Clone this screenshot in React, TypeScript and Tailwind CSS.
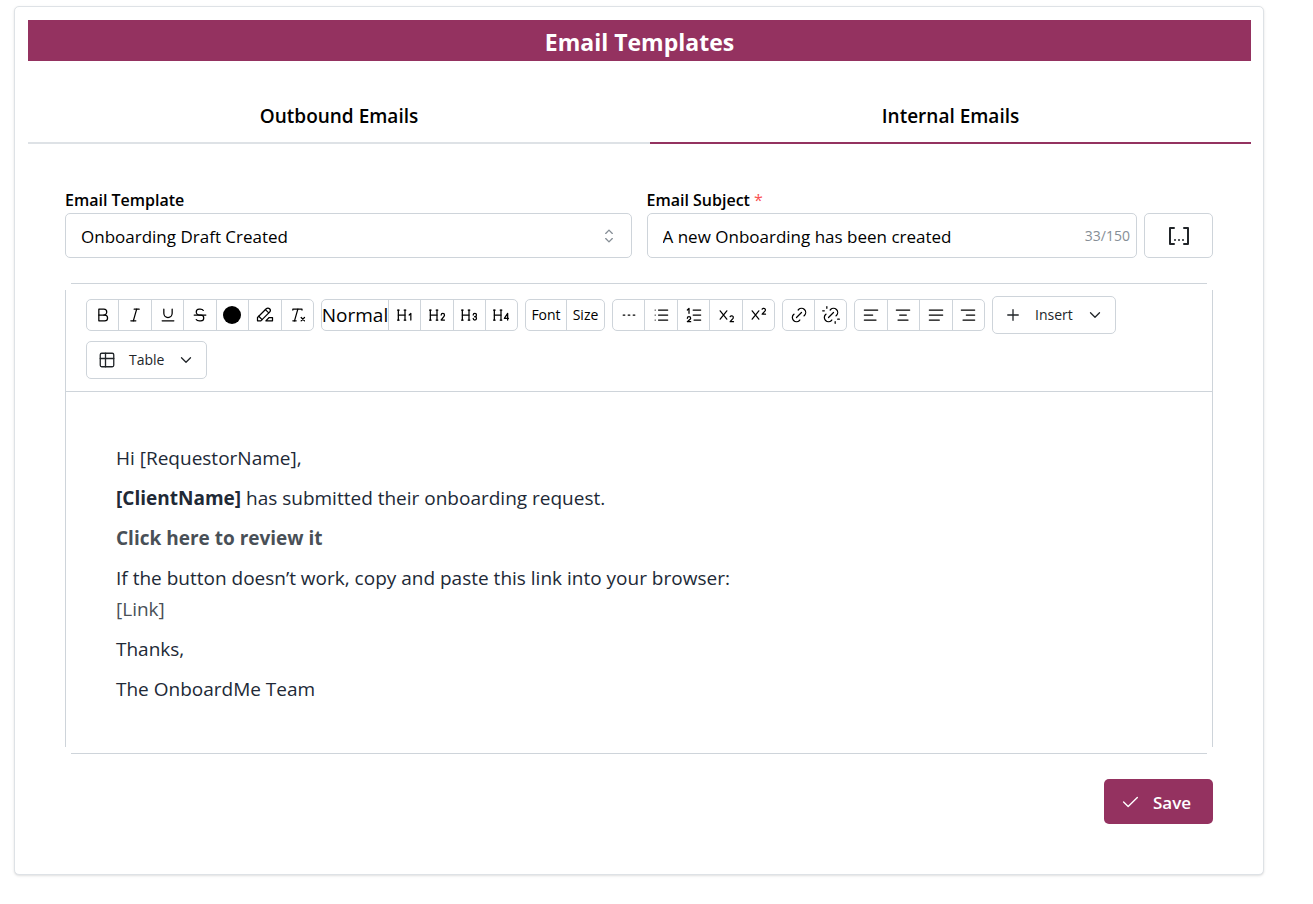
import React, { useState } from 'react';
import {
  TbAlignCenter, TbAlignJustified, TbAlignLeft, TbAlignRight, TbBold, TbBracketsContain, TbCheck,
  TbChevronDown, TbClearFormatting, TbH1, TbH2, TbH3, TbH4, TbHighlight, TbItalic, TbLineDashed,
  TbLink, TbList, TbListNumbers, TbPlus, TbStrikethrough, TbSubscript, TbSuperscript, TbTable,
  TbUnderline, TbUnlink,
} from 'react-icons/tb';
import type { IconType } from 'react-icons';

const SUBJECT_LIMIT = 150;

interface ControlProps {
  label: string;
  icon?: IconType;
  className?: string;
  children?: React.ReactNode;
}

function Control({ label, icon: Icon, className = 'flex-1', children }: ControlProps) {
  return (
    <button type="button" aria-label={label} className={`flex h-full items-center justify-center whitespace-nowrap text-black hover:bg-gray-50 ${className}`}>
      {Icon ? <Icon size={20} strokeWidth={1.5} /> : children}
    </button>
  );
}

function ControlGroup({ className, children }: { className: string; children: React.ReactNode }) {
  return (
    <div className={`flex h-8 divide-x divide-[#ced4da] overflow-hidden rounded-[5px] border border-[#ced4da] ${className}`}>
      {children}
    </div>
  );
}

function MenuButton({ icon: Icon, label }: { icon: IconType; label: string }) {
  return (
    <button type="button" className="flex h-[38px] items-center gap-[13px] rounded-[5px] border border-[#ced4da] px-[11px] text-sm font-medium text-[#212529] hover:bg-gray-50">
      <Icon size={18} strokeWidth={1.75} />
      {label}
      <TbChevronDown size={18} strokeWidth={1.75} />
    </button>
  );
}

function Toolbar() {
  return (
    <div className="flex flex-wrap items-center gap-[7px] px-5 pt-[6px] pb-3">
      <ControlGroup className="w-[228px]">
        <Control label="Bold" icon={TbBold} />
        <Control label="Italic" icon={TbItalic} />
        <Control label="Underline" icon={TbUnderline} />
        <Control label="Strikethrough" icon={TbStrikethrough} />
        <Control label="Text color">
          <span className="size-[18px] rounded-full bg-black" />
        </Control>
        <Control label="Highlight text" icon={TbHighlight} />
        <Control label="Clear formatting" icon={TbClearFormatting} />
      </ControlGroup>
      <ControlGroup className="w-[197px]">
        <Control label="Normal text" className="w-[67px] text-[19px]">Normal</Control>
        <Control label="Heading 1" icon={TbH1} />
        <Control label="Heading 2" icon={TbH2} />
        <Control label="Heading 3" icon={TbH3} />
        <Control label="Heading 4" icon={TbH4} />
      </ControlGroup>
      <ControlGroup className="w-[80px]">
        <Control label="Font" className="w-[41px] text-sm">Font</Control>
        <Control label="Size" className="flex-1 text-sm">Size</Control>
      </ControlGroup>
      <ControlGroup className="w-[163px]">
        <Control label="Horizontal line" icon={TbLineDashed} />
        <Control label="Bullet list" icon={TbList} />
        <Control label="Ordered list" icon={TbListNumbers} />
        <Control label="Subscript" icon={TbSubscript} />
        <Control label="Superscript" icon={TbSuperscript} />
      </ControlGroup>
      <ControlGroup className="w-[65px]">
        <Control label="Link" icon={TbLink} />
        <Control label="Remove link" icon={TbUnlink} />
      </ControlGroup>
      <ControlGroup className="w-[131px]">
        <Control label="Align left" icon={TbAlignLeft} />
        <Control label="Align center" icon={TbAlignCenter} />
        <Control label="Justify" icon={TbAlignJustified} />
        <Control label="Align right" icon={TbAlignRight} />
      </ControlGroup>
      <MenuButton icon={TbPlus} label="Insert" />
      <MenuButton icon={TbTable} label="Table" />
    </div>
  );
}

function Editor() {
  return (
    <div className="mt-[25px]">
      <div className="mx-[6px] h-px bg-[#ced4da]" />
      <div className="h-[6px]" />
      <div className="border-x border-[#ced4da]">
        <Toolbar />
        <div
          role="textbox"
          aria-label="Email body"
          aria-multiline="true"
          contentEditable
          suppressContentEditableWarning
          className="flex flex-col gap-[9px] border-t border-[#ced4da] px-[50px] pt-[51px] pb-[42px] text-[19px] leading-[31px] text-[#212936] outline-none"
        >
          <p>Hi [RequestorName],</p>
          <p><strong>[ClientName]</strong> has submitted their onboarding request.</p>
          <p><a href="#review" className="font-bold text-[#495057]">Click here to review it</a></p>
          <p>
            If the button doesn’t work, copy and paste this link into your browser:
            <br />
            <a href="#link" className="text-[#495057]">[Link]</a>
          </p>
          <p>Thanks,</p>
          <p>The OnboardMe Team</p>
        </div>
      </div>
      <div className="h-[6px]" />
      <div className="mx-[6px] h-px bg-[#ced4da]" />
    </div>
  );
}

function Tabs() {
  const [active, setActive] = useState('Internal Emails');
  return (
    <div role="tablist" className="mt-[27px] flex">
      {['Outbound Emails', 'Internal Emails'].map((tab) => (
        <button
          key={tab}
          type="button"
          role="tab"
          aria-selected={active === tab}
          onClick={() => setActive(tab)}
          className={`h-14 grow border-b-2 pt-[2px] text-[19px] font-semibold text-black ${active === tab ? 'border-[#943260]' : 'border-[#dee2e6]'}`}
        >
          {tab}
        </button>
      ))}
    </div>
  );
}

export default function App() {
  const [subject, setSubject] = useState('A new Onboarding has been created');

  return (
    <main className="mt-[6px] mr-[49px] mb-7 ml-[14px] rounded-[5px] border border-[#dee2e6] bg-white pt-[13px] pr-3 pb-[50px] pl-[13px] font-['Open_Sans',sans-serif] text-black shadow-sm">
      <h1 className="bg-[#943260] pt-[6px] pb-[3px] text-center text-[23px] leading-8 font-bold text-white">
        Email Templates
      </h1>
      <Tabs />

      <section className="pt-[44px] pr-[38px] pl-[37px]">
        <div className="grid grid-cols-2 gap-[15px]">
          <div>
            <label htmlFor="template" className="block h-[25px] text-base leading-6 font-semibold">Email Template</label>
            <div className="grid items-center">
              <select id="template" className="col-start-1 row-start-1 h-[45px] w-full appearance-none rounded-[5px] border border-[#ced4da] bg-white px-[15px] pt-[2px] text-[17px]">
                <option>Onboarding Draft Created</option>
              </select>
              <svg viewBox="0 0 15 15" className="pointer-events-none col-start-1 row-start-1 mr-3 size-[22px] justify-self-end text-[#868e96]" fill="currentColor">
                <path d="M4.93179 5.43179C4.75605 5.60753 4.75605 5.89245 4.93179 6.06819C5.10753 6.24392 5.39245 6.24392 5.56819 6.06819L7.49999 4.13638L9.43179 6.06819C9.60753 6.24392 9.89245 6.24392 10.0682 6.06819C10.2439 5.89245 10.2439 5.60753 10.0682 5.43179L7.81819 3.18179C7.73379 3.0974 7.61933 3.04999 7.49999 3.04999C7.38064 3.04999 7.26618 3.0974 7.18179 3.18179L4.93179 5.43179ZM10.0682 9.56819C10.2439 9.39245 10.2439 9.10753 10.0682 8.93179C9.89245 8.75606 9.60753 8.75606 9.43179 8.93179L7.49999 10.8636L5.56819 8.93179C5.39245 8.75606 5.10753 8.75606 4.93179 8.93179C4.75605 9.10753 4.75605 9.39245 4.93179 9.56819L7.18179 11.8182C7.35753 11.9939 7.64245 11.9939 7.81819 11.8182L10.0682 9.56819Z" />
              </svg>
            </div>
          </div>

          <div>
            <label htmlFor="subject" className="block h-[25px] text-base leading-6 font-semibold">
              Email Subject <span className="font-normal text-[#fa5252]">*</span>
            </label>
            <div className="flex gap-[7px]">
              <div className="flex h-[45px] min-w-0 flex-1 items-center rounded-[5px] border border-[#ced4da] pr-[6px] pl-[15px]">
                <input
                  id="subject"
                  type="text"
                  required
                  maxLength={SUBJECT_LIMIT}
                  value={subject}
                  onChange={(e) => setSubject(e.target.value)}
                  className="min-w-0 flex-1 pt-[2px] text-[17px] outline-none"
                />
                <span className="text-sm text-[#868e96]">{subject.length}/{SUBJECT_LIMIT}</span>
              </div>
              <button type="button" aria-label="Insert placeholder" className="flex h-[45px] w-[69px] items-center justify-center rounded-[5px] border border-[#ced4da] text-[#212529]">
                <TbBracketsContain size={24} />
              </button>
            </div>
          </div>
        </div>

        <Editor />

        <div className="mt-[25px] flex justify-end">
          <button type="button" className="flex h-[45px] w-[109px] items-center gap-3 rounded-[5px] bg-[#943260] pl-[15px] text-[17px] font-semibold text-white">
            <TbCheck size={22} strokeWidth={1.5} />
            <span className="pt-[2px]">Save</span>
          </button>
        </div>
      </section>
    </main>
  );
}
